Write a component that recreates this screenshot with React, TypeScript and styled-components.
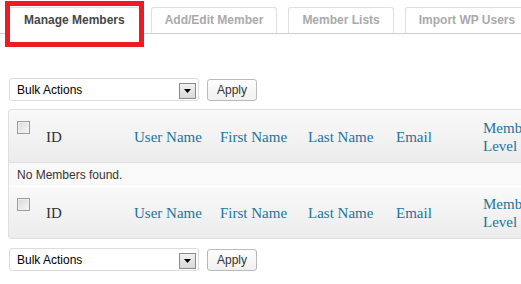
import styled, { createGlobalStyle } from "styled-components";

const GlobalStyle = createGlobalStyle`
  body {
    margin: 0;
    background: #fff;
    overflow: hidden;
    font-family: "Liberation Sans", Arial, sans-serif;
  }
`;

const tabs = ["Manage Members", "Add/Edit Member", "Member Lists", "Import WP Users"];

const columns = [
  { label: "ID", width: 88, sortable: false },
  { label: "User Name", width: 86, sortable: true },
  { label: "First Name", width: 88, sortable: true },
  { label: "Last Name", width: 88, sortable: true },
  { label: "Email", width: 87, sortable: true },
  { label: "Member Level", width: 70, sortable: true },
];

const BulkActions = () => (
  <ActionBar>
    <Select>
      <span>Bulk Actions</span>
      <DropButton>
        <svg width="7" height="4" viewBox="0 0 7 4">
          <path d="M0 0h7L3.5 4z" fill="#000" />
        </svg>
      </DropButton>
    </Select>
    <ApplyButton>Apply</ApplyButton>
  </ActionBar>
);

const HeaderRow = ({ foot }: { foot?: boolean }) => (
  <HeadRow $foot={foot}>
    <CheckCell>
      <Checkbox />
    </CheckCell>
    {columns.map((col) => (
      <HeadCell key={col.label} $sortable={col.sortable} style={{ width: col.width }}>
        {col.label}
      </HeadCell>
    ))}
  </HeadRow>
);

export default function App() {
  return (
    <Page>
      <GlobalStyle />
      <TabBar>
        {tabs.map((t, i) => (
          <Tab key={t} $active={i === 0}>
            {t}
          </Tab>
        ))}
        <Highlight />
      </TabBar>
      <Content>
        <BulkActions />
        <Table>
          <HeaderRow />
          <EmptyRow>No Members found.</EmptyRow>
          <HeaderRow foot />
        </Table>
        <BulkActions />
      </Content>
    </Page>
  );
}

const Page = styled.div`
  width: 521px;
  height: 284px;
  overflow: hidden;
`;

const TabBar = styled.div`
  position: relative;
  display: flex;
  gap: 11px;
  padding: 7px 0 0 9px;
  border-bottom: 1px solid #cfcfcf;
  white-space: nowrap;
`;

const Tab = styled.div<{ $active?: boolean }>`
  height: 25px;
  line-height: 24px;
  padding: 0 ${(p) => (p.$active ? 14 : 13)}px;
  border: 1px solid #dfdfdf;
  border-bottom: none;
  border-radius: 3px 3px 0 0;
  background: #fff;
  font-size: 12px;
  font-weight: bold;
  color: ${(p) => (p.$active ? "#464646" : "#aaa")};
  flex-shrink: 0;
  ${(p) =>
    p.$active &&
    `
    height: 26px;
    margin-bottom: -1px;
  `}
`;

const Highlight = styled.div`
  position: absolute;
  left: 5px;
  top: 1px;
  width: 139px;
  height: 46px;
  box-sizing: border-box;
  border: 5px solid #ed1c24;
`;

const Content = styled.div`
  padding: 44px 0 0 8px;
`;

const ActionBar = styled.div`
  display: flex;
  align-items: flex-end;
  gap: 8px;
  padding-left: 1px;
  height: 23px;
  margin-bottom: 8px;

  & + div + & {
    margin-top: 9px;
  }
`;

const Select = styled.div`
  position: relative;
  box-sizing: border-box;
  width: 190px;
  height: 23px;
  border: 1px solid #dcdcdc;
  border-radius: 3px;
  background: #fff;
  font-size: 12px;
  line-height: 22px;
  padding-left: 7px;
  color: #000;
`;

const DropButton = styled.span`
  position: absolute;
  right: 2px;
  top: 4px;
  box-sizing: border-box;
  width: 17px;
  height: 16px;
  border: 1px solid #8a8a8a;
  background: linear-gradient(#f2f2f2, #d8d8d8);
  display: flex;
  align-items: center;
  justify-content: center;
`;

const ApplyButton = styled.div`
  box-sizing: border-box;
  width: 50px;
  height: 22px;
  border: 1px solid #bbb;
  border-radius: 3px;
  background: linear-gradient(#fefefe, #f0f0f0);
  font-size: 12px;
  line-height: 20px;
  text-align: center;
  color: #333;
`;

const Table = styled.div`
  width: 640px;
  border: 1px solid #dfdfdf;
  border-radius: 3px;
  overflow: hidden;
  background: #f9f9f9;
`;

const HeadRow = styled.div<{ $foot?: boolean }>`
  display: flex;
  height: ${(p) => (p.$foot ? 51 : 52)}px;
  background: linear-gradient(#f9f9f9, #ececec);
  ${(p) =>
    p.$foot ? "border-top: 1px solid #fff;" : "border-bottom: 1px solid #dfdfdf;"}
`;

const CheckCell = styled.div`
  width: 21px;
  padding: 11px 0 0 8px;
  flex-shrink: 0;
`;

const Checkbox = styled.span`
  display: block;
  box-sizing: border-box;
  width: 13px;
  height: 13px;
  border: 1px solid #9c9c9c;
  background: linear-gradient(135deg, #d8d8d8, #f8f8f8);
  box-shadow: inset 0 0 0 1px #eee;
`;

const HeadCell = styled.div<{ $sortable?: boolean }>`
  box-sizing: border-box;
  flex-shrink: 0;
  display: flex;
  align-items: center;
  padding: 1px 0 0 8px;
  font-family: "Liberation Serif", "Times New Roman", serif;
  font-size: 15px;
  line-height: 18px;
  color: ${(p) => (p.$sortable ? "#21759b" : "#333")};
`;

const EmptyRow = styled.div`
  height: 23px;
  line-height: 25px;
  padding-left: 8px;
  font-size: 12px;
  color: #333;
  background: #f9f9f9;
`;
